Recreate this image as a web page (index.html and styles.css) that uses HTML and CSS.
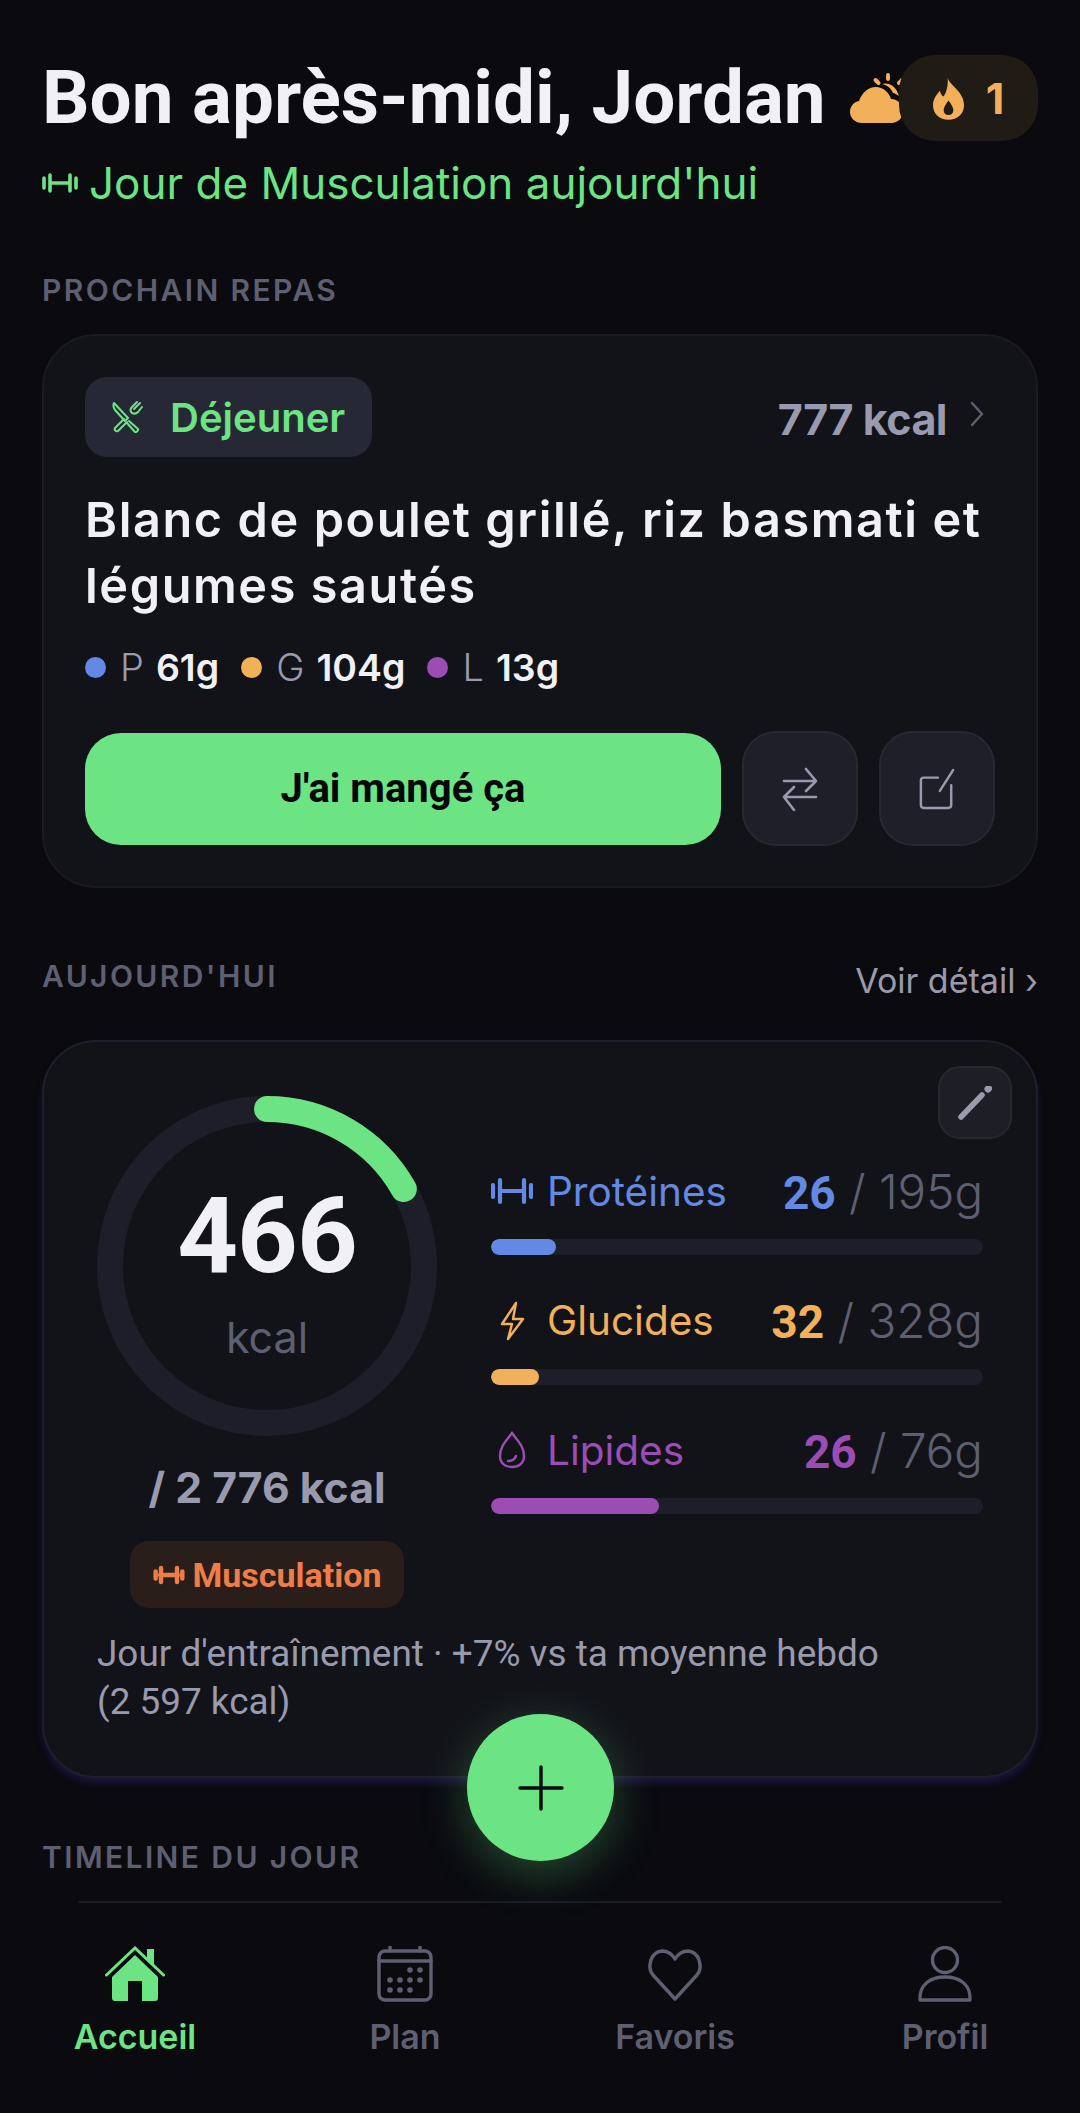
FILE: index.html
```html
<!DOCTYPE html>
<html lang="fr">
<head>
<meta charset="utf-8">
<title>Accueil</title>
<link rel="stylesheet" href="styles.css">
</head>
<body>
<main class="main">
  <header class="header">
    <h1 class="greeting">Bon après-midi, Jordan
      <svg class="cloud" viewBox="0 0 58 50" fill="#f2b05a"><path d="M12 50C5 50 0 45 0 39c0-6 4-10 9-11 3-8 9-14 17-14 7 0 13 5 15 12 7 0 12 6 12 12 0 7-5 12-12 12z"/><path d="M32 11c6-2 14 1 17 12-2-1-4-3-6-3-2-5-6-8-11-9z"/><g stroke="#f2b05a" stroke-width="4" stroke-linecap="round" fill="none"><path d="M38 2v4M25.500 7l3 3M52 7l-3 3M52 19.700h4"/></g></svg>
    </h1>
    <p class="subtitle">
      <svg class="ic-dumb" viewBox="0 0 36 24" fill="none" stroke="currentColor" stroke-width="3.6" stroke-linecap="round"><path d="M8 12h20M8 4v16M28 4v16M2 7v10M34 7v10"/></svg>
      Jour de Musculation aujourd'hui</p>
    <div class="streak">
      <svg class="flame" viewBox="0 0 32 44" fill="#f2b05a"><path fill-rule="evenodd" d="M15 0c1 8 17 14 17 29 0 9-7 15-16 15S0 38 0 29C0 22 4 18 7 14c1 3 2 5 4 6 3-5 5-12 4-20zm1 24c-3 4-5 7-5 10 0 3 2 5 5 5s5-2 5-5c0-3-2-6-5-10z"/></svg>
      <span>1</span>
    </div>
  </header>

  <h2 class="label label-first">PROCHAIN REPAS</h2>
  <section class="card meal">
    <div class="meal-top">
      <div class="meal-tag">
        <svg class="ic-fork" viewBox="0 0 32 32" fill="none" stroke="currentColor" stroke-width="2" stroke-linejoin="round" stroke-linecap="round"><path d="M3 2l14 15-3 3L4 9C2 6 2 4 3 2zM18 20l9 8c1 1-2 4-3 3l-8-9"/><path d="M29 2v0l-6 6M26 1l-5 5c-2 2-2 4 0 6 2 1 4 1 6-1l4-5M13 18L4 27c-1 2 1 4 3 3l9-9"/></svg>
        Déjeuner
      </div>
      <div class="meal-kcal">777 kcal
        <svg class="chev" viewBox="0 0 16 28" fill="none" stroke="#5f5f72" stroke-width="2.4" stroke-linecap="round" stroke-linejoin="round"><path d="M3 3l10 11L3 25"/></svg>
      </div>
    </div>
    <h3 class="meal-title">Blanc de poulet grillé, riz basmati et légumes sautés</h3>
    <div class="meal-macros">
      <span class="dot dot-p"></span><span class="m-l">P</span><b class="m-v">61g</b>
      <span class="dot dot-g"></span><span class="m-l">G</span><b class="m-v">104g</b>
      <span class="dot dot-f"></span><span class="m-l">L</span><b class="m-v">13g</b>
    </div>
    <div class="meal-actions">
      <button class="eat">J'ai mangé ça</button>
      <button class="square"><svg viewBox="0 0 36 44" fill="none" stroke="#9a9aae" stroke-width="2.6" stroke-linecap="round" stroke-linejoin="round"><path d="M2 14h32M24 2l10 12-10 10M34 30H2M12 20L2 30l10 13"/></svg></button>
      <button class="square"><svg viewBox="0 0 38 44" fill="none" stroke="#9a9aae" stroke-width="2.6" stroke-linecap="round" stroke-linejoin="round"><path d="M20 10H5c-2 0-3 1-3 3v26c0 2 1 3 3 3h26c2 0 3-1 3-3V18M22 24L36 2"/></svg></button>
    </div>
  </section>

  <div class="section-head">
    <h2 class="label">AUJOURD'HUI</h2>
    <span class="see">Voir détail ›</span>
  </div>
  <section class="card today">
    <button class="edit"><svg viewBox="0 0 34 34" fill="none" stroke="#9a9aae" stroke-width="5.5" stroke-linecap="round"><path d="M3 31L24 9"/><path d="M30 3l.5-.5" stroke-width="7"/></svg></button>
    <div class="today-grid">
      <div class="ring-col">
        <div class="ring">
          <svg class="ring-svg" viewBox="0 0 340 340" fill="none" stroke-width="26"><circle cx="170" cy="170" r="157" stroke="#1d1e29"/><path d="M170 13A157 157 0 0 1 306.800 93" stroke="#6ce484" stroke-linecap="round"/></svg>
          <div class="ring-txt"><strong>466</strong><span>kcal</span></div>
        </div>
        <div class="goal">/ 2 776 kcal</div>
        <div class="type"><svg class="ic-mini" viewBox="0 0 36 24" fill="none" stroke="currentColor" stroke-width="5" stroke-linecap="round"><path d="M8 12h20M9 4v16M27 4v16M3 8v8M33 8v8"/></svg>Musculation</div>
      </div>
      <div class="macros">
        <div class="macro">
          <div class="macro-head c-p">
            <svg class="m-ic" viewBox="0 0 42 28" fill="none" stroke="currentColor" stroke-width="4.2" stroke-linecap="round"><path d="M9 14h24M9 3v22M33 3v22M2 8v12M40 8v12"/></svg>
            <span class="macro-name">Protéines</span><span class="macro-val"><b>26</b> / 195g</span>
          </div>
          <div class="bar"><div class="fill f-p" style="width:65px"></div></div>
        </div>
        <div class="macro">
          <div class="macro-head c-g">
            <svg class="m-ic" viewBox="0 0 42 40" fill="none" stroke="currentColor" stroke-width="2.4" stroke-linejoin="round"><path d="M25 2L11 23h10l-4 15 15-20H22z"/></svg>
            <span class="macro-name">Glucides</span><span class="macro-val"><b>32</b> / 328g</span>
          </div>
          <div class="bar"><div class="fill f-g" style="width:48px"></div></div>
        </div>
        <div class="macro">
          <div class="macro-head c-f">
            <svg class="m-ic" viewBox="0 0 42 38" fill="none" stroke="currentColor" stroke-width="2.4" stroke-linecap="round"><path d="M21 2c5 7 12 13 12 23 0 7-5 11-12 11S9 32 9 25C9 15 16 9 21 2z"/><path d="M17 30c4 0 7-2 8-5"/></svg>
            <span class="macro-name">Lipides</span><span class="macro-val"><b>26</b> / 76g</span>
          </div>
          <div class="bar"><div class="fill f-f" style="width:168px"></div></div>
        </div>
      </div>
    </div>
    <p class="note">Jour d'entraînement · +7% vs ta moyenne hebdo<br>(2 597 kcal)</p>
  </section>

  <h2 class="label label-timeline">TIMELINE DU JOUR</h2>
  <button class="fab"><svg viewBox="0 0 46 46" fill="none" stroke="#0a0a0f" stroke-width="3.4" stroke-linecap="round"><path d="M23 2v42M2 23h42"/></svg></button>
</main>

<div class="nav-rule"></div>
<nav class="nav">
  <a class="tab tab-on">
    <svg class="tab-ic" viewBox="0 0 60 56" fill="#6ce484"><path d="M1.500 29L30 2l28.500 27" fill="none" stroke="#6ce484" stroke-width="3" stroke-linecap="round"/><path d="M42 3h7v17l-7-6z"/><path fill-rule="evenodd" d="M30 9L7 31v21c0 2 1 3 3 3h13V35h14v20h13c2 0 3-1 3-3V31z"/></svg>
    <span>Accueil</span>
  </a>
  <a class="tab">
    <svg class="tab-ic" viewBox="0 0 60 56" fill="none" stroke="#5f5f72" stroke-width="3.4" stroke-linecap="round"><rect x="4" y="5" width="52" height="49" rx="6"/><path d="M4 15h52M15 1v4M45 1v4"/><g fill="#5f5f72" stroke="none"><circle cx="35" cy="24" r="2.800"/><circle cx="45" cy="24" r="2.800"/><circle cx="15" cy="34" r="2.800"/><circle cx="25" cy="34" r="2.800"/><circle cx="35" cy="34" r="2.800"/><circle cx="45" cy="34" r="2.800"/><circle cx="15" cy="44" r="2.800"/><circle cx="25" cy="44" r="2.800"/><circle cx="35" cy="44" r="2.800"/></g></svg>
    <span>Plan</span>
  </a>
  <a class="tab">
    <svg class="tab-ic" viewBox="0 0 60 56" fill="none" stroke="#5f5f72" stroke-width="3.4" stroke-linejoin="round"><path d="M30 53L8 29C2 22 5 6 17 5c6 0 10 3 13 8 3-5 7-8 13-8 12 1 15 17 9 24z"/></svg>
    <span>Favoris</span>
  </a>
  <a class="tab">
    <svg class="tab-ic" viewBox="0 0 60 56" fill="none" stroke="#5f5f72" stroke-width="3.4" stroke-linejoin="round"><circle cx="30" cy="14" r="12.500"/><path d="M5 54c-1-16 11-23 25-23s26 7 25 23z"/></svg>
    <span>Profil</span>
  </a>
</nav>
</body>
</html>
```
FILE: styles.css
```css
* { box-sizing: border-box; }
html, body { margin: 0; padding: 0; }
body {
  width: 1080px; height: 2113px; overflow: hidden;
  background: #0a0a0f; color: #f0f0f5;
  font-family: Inter, sans-serif;
  display: flex; flex-direction: column;
}
button { font-family: inherit; border: 0; padding: 0; cursor: pointer; }
h1, h2, h3, p { margin: 0; font-weight: inherit; }

.main { flex: 1; padding: 0 42px; position: relative; min-height: 0; }

.header { padding-top: 53px; position: relative; }
.greeting {
  font: 700 74.600px/90px Roboto, sans-serif;
  white-space: nowrap; display: flex; align-items: center; gap: 24px;
}
.cloud { width: 58px; height: 50px; flex: none; }
.subtitle {
  font-size: 44px; line-height: 52px; color: #6ce484; margin-top: 14px;
  display: flex; align-items: center; gap: 11px;
}
.ic-dumb { width: 36px; height: 24px; flex: none; }
.streak {
  position: absolute; right: 0; top: 55px; width: 139px; height: 86px;
  border-radius: 36px; background: #211b16; color: #f2b05a;
  display: flex; align-items: center; justify-content: center; gap: 22px;
  font-weight: 700; font-size: 43px;
}
.flame { width: 31px; height: 43px; }

.label {
  font-size: 30px; line-height: 36px; font-weight: 600; letter-spacing: 2.400px;
  color: #5f5f72;
}
.label-first { margin-top: 63px; }

.card { background: #121318; border: 2px solid #191a22; border-radius: 54px; }
.meal { margin-top: 26px; height: 554px; padding: 41px 41px 0; }
.meal-top { display: flex; justify-content: space-between; align-items: center; }
.meal-tag {
  height: 80px; width: 287px; border-radius: 22px; background: #272836;
  color: #6ce484; font-size: 40px; font-weight: 600;
  display: flex; align-items: center; padding-left: 26px; gap: 27px;
}
.ic-fork { width: 32px; height: 32px; }
.meal-kcal {
  font-size: 43px; font-weight: 700; color: #9a9aae; letter-spacing: -0.5px; margin-top: 3px;
  display: flex; align-items: center; gap: 22px; padding-right: 10px;
}
.chev { width: 16px; height: 28px; margin-top: -9px; }
.meal-title {
  margin-top: 30px; font-size: 48.600px; line-height: 66px; font-weight: 600;
  letter-spacing: 1.600px;
}
.meal-macros {
  margin-top: 16px; display: flex; align-items: center; font-size: 38px; line-height: 65px;
}
.dot { width: 21px; height: 21px; border-radius: 50%; margin-right: 14px; }
.dot-p { background: #6389e4; }
.dot-g { background: #f2b05a; }
.dot-f { background: #9b4db5; }
.m-l { color: #9a9aae; font-weight: 300; margin-right: 12px; }
.m-v { color: #f0f0f5; font-weight: 600; margin-right: 22px; font-size: 37.500px; }
.meal-actions { margin-top: 31px; display: flex; align-items: center; gap: 21px; }
.eat {
  width: 637px; height: 112px; border-radius: 36px; background: #6ce484;
  font: 700 40px Roboto, sans-serif; color: #07070a;
}
.square {
  width: 116px; height: 115px; border-radius: 34px; flex: none;
  background: #1e1f29; border: 2px solid #272834;
  display: flex; align-items: center; justify-content: center;
}
.square svg { width: 36px; height: 44px; }

.section-head {
  margin-top: 70px; display: flex; justify-content: space-between; align-items: center;
  height: 36px;
}
.see { color: #9a9aae; font-size: 34px; margin-top: 8px; }

.today {
  margin-top: 46px; height: 738px; position: relative; padding: 54px 53px 0;
  border-color: #1e1f2c;
  box-shadow: 0 6px 10px -2px rgba(70, 50, 170, .35);
}
.edit {
  position: absolute; top: 24px; right: 24px; width: 74px; height: 73px;
  border-radius: 22px; background: #1e1f26; border: 2px solid #262731;
  display: flex; align-items: center; justify-content: center;
}
.edit svg { width: 34px; height: 34px; }
.today-grid { display: grid; grid-template-columns: 340px 492px; column-gap: 54px; }
.ring-col { display: flex; flex-direction: column; align-items: center; }
.ring { width: 340px; height: 340px; position: relative; }
.ring-svg { width: 340px; height: 340px; display: block; }
.ring-txt {
  position: absolute; inset: 0; display: flex; flex-direction: column; align-items: center;
}
.ring-txt strong {
  font: 700 106px/120px Roboto, sans-serif; letter-spacing: -1px; margin-top: 80px;
}
.ring-txt span { font-size: 43px; line-height: 50px; color: #5f5f72; margin-top: 16px; }
.goal {
  margin-top: 26px; font-size: 42.700px; line-height: 52px; font-weight: 700; color: #9a9aae;
}
.type {
  margin-top: 27px; height: 67px; width: 274px; border-radius: 19px; background: #2a1e1b;
  color: #ee7d48; font: 700 34px Roboto, sans-serif;
  display: flex; align-items: center; justify-content: center; gap: 8px;
}
.ic-mini { width: 32px; height: 22px; }
.macros { padding-top: 65px; display: flex; flex-direction: column; gap: 35.500px; }
.macro-head { display: flex; align-items: center; height: 60px; margin-bottom: 18px; }
.m-ic { width: 42px; height: 40px; flex: none; margin-right: 14px; }
.macro-name { font-size: 40.500px; }
.macro-val { margin-left: auto; font-size: 47.500px; font-weight: 300; color: #5f5f72; white-space: pre; }
.macro-val b { font: 700 46px Roboto, sans-serif; }
.c-p, .c-p b { color: #6389e4; }
.c-g, .c-g b { color: #f2b05a; }
.c-f, .c-f b { color: #9b4db5; }
.bar { height: 16px; border-radius: 8px; background: #1d1e29; overflow: hidden; }
.fill { height: 100%; border-radius: 8px; }
.f-p { background: #6389e4; }
.f-g { background: #f2b05a; }
.f-f { background: #9b4db5; }
.note {
  position: absolute; left: 53px; top: 588px; width: 860px;
  font: 400 36.900px/48px Roboto, sans-serif; color: #9a9aae;
}

.label-timeline { margin-top: 61px; }
.fab {
  position: absolute; left: 467px; top: 1714px; width: 147px; height: 147px; border-radius: 50%;
  background: #6ce484; box-shadow: 0 12px 48px rgba(108, 228, 132, .3);
  display: flex; align-items: center; justify-content: center;
}
.fab svg { width: 46px; height: 46px; }

.nav-rule { height: 2px; margin: 0 78px; background: #1b1c24; border-radius: 1px; flex: none; }
.nav { display: grid; grid-template-columns: repeat(4, 270px); height: 210px; flex: none; padding-top: 43px; }
.tab {
  display: flex; flex-direction: column; align-items: center;
  color: #5f5f72; font-size: 34px; font-weight: 600; line-height: 40px; gap: 15px;
}
.tab-ic { width: 60px; height: 56px; }
.tab-on { color: #6ce484; }
```
